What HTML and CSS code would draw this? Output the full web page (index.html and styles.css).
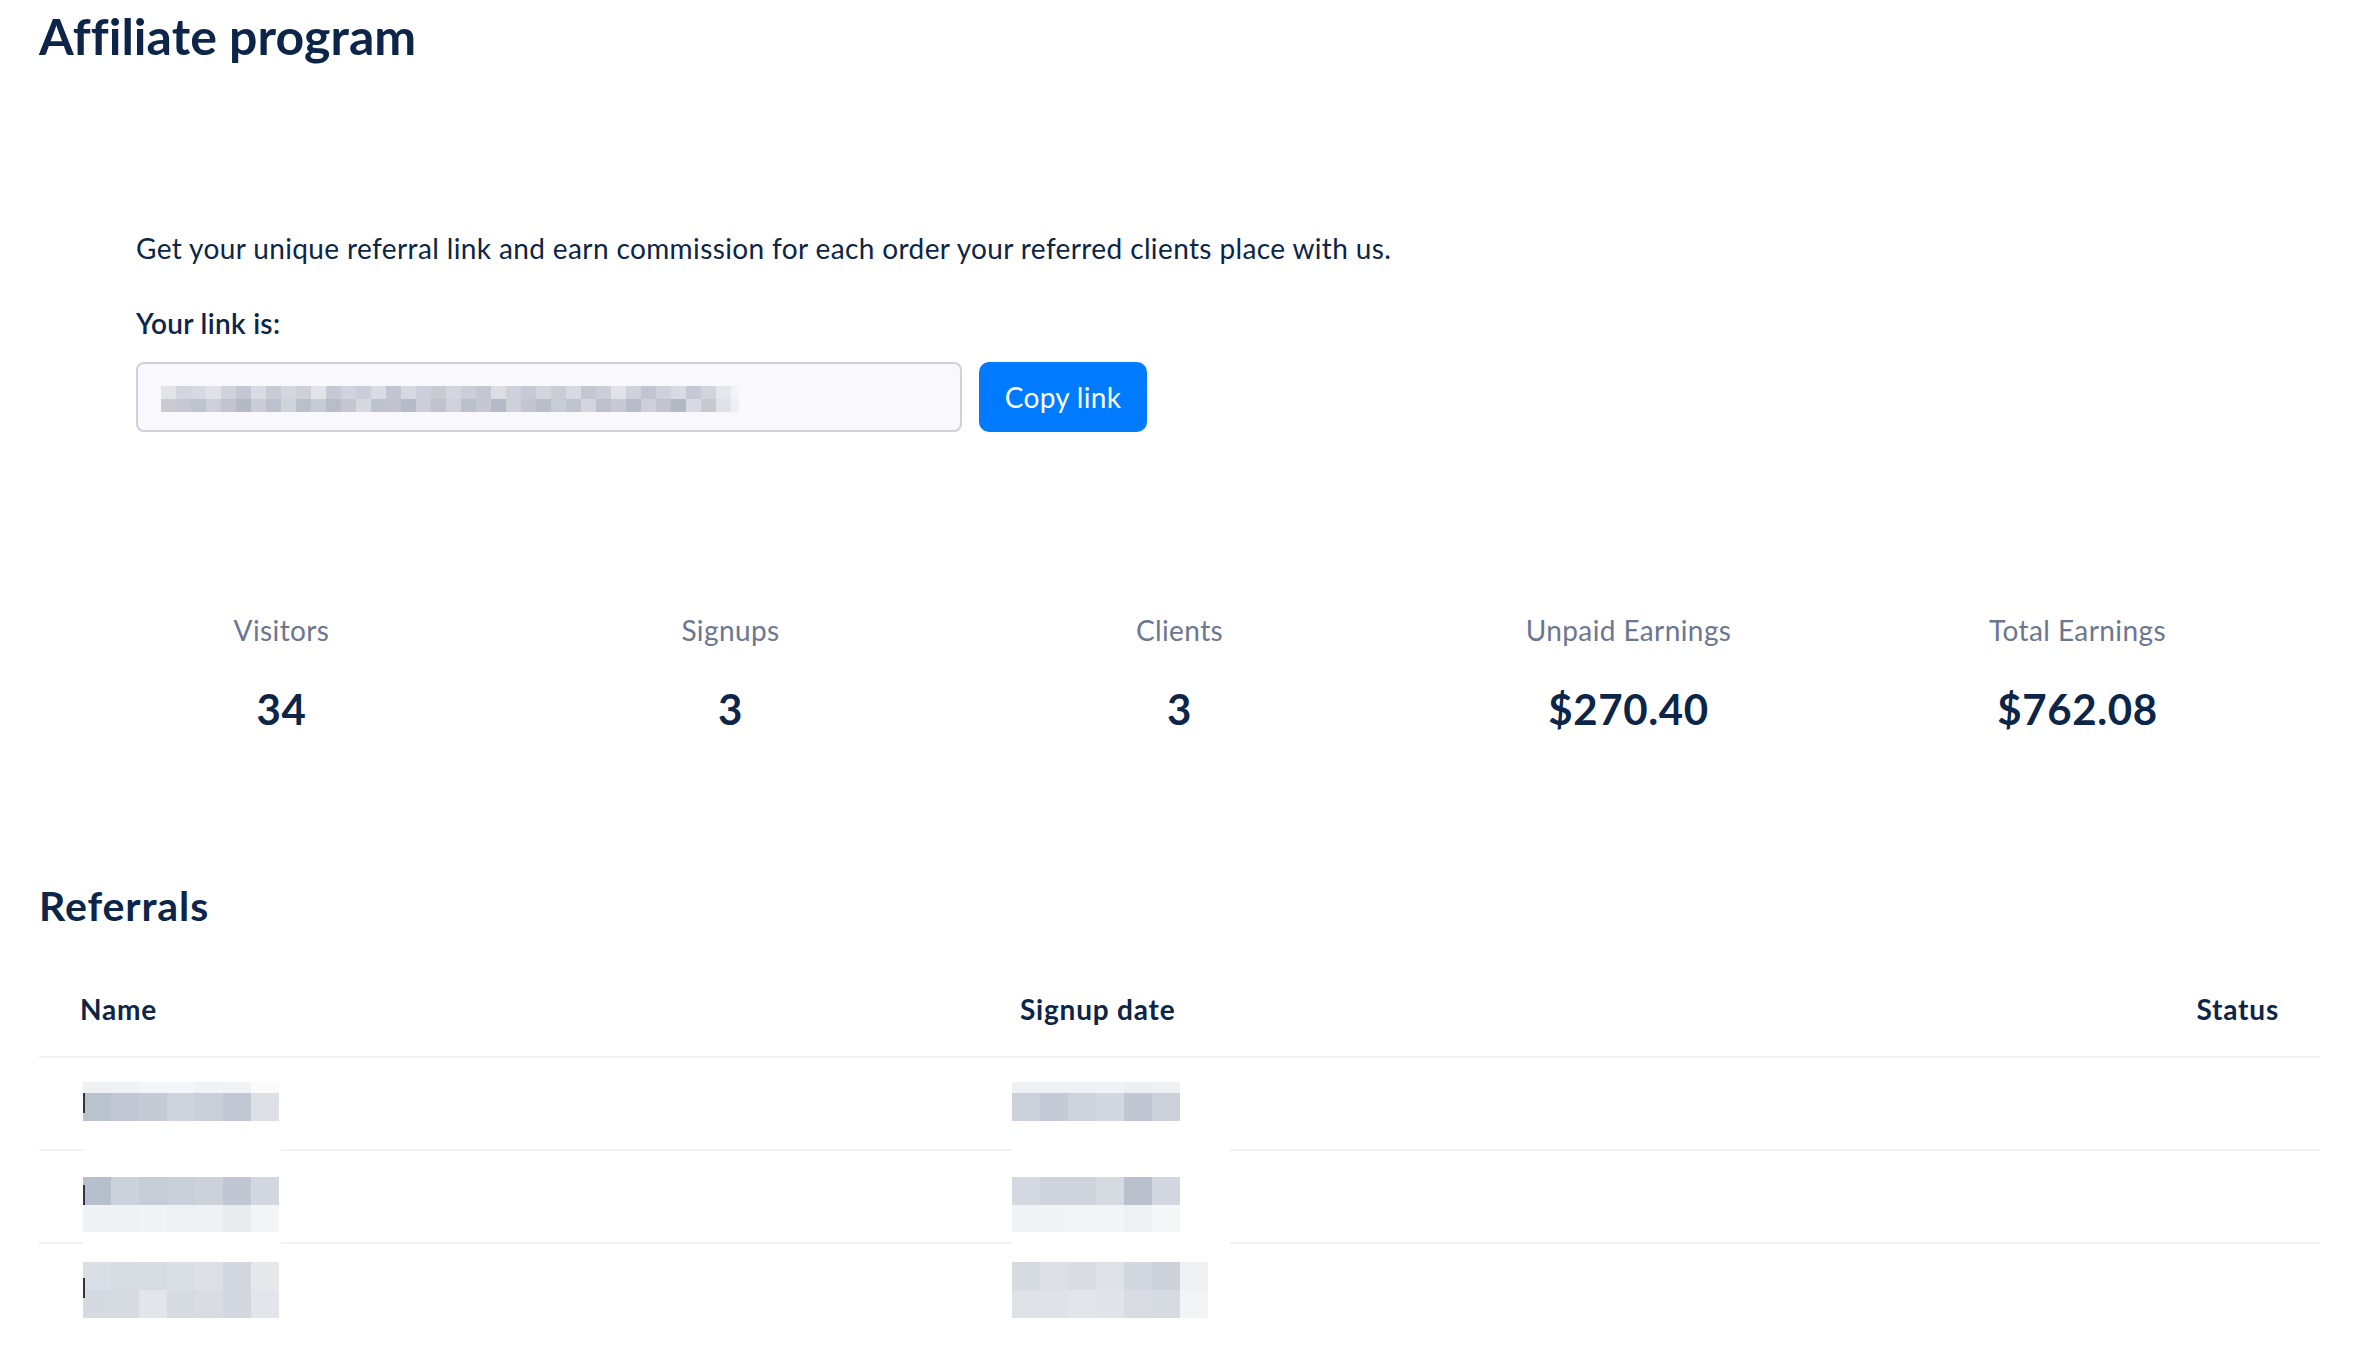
FILE: index.html
```html
<!DOCTYPE html>
<html lang="en">
<head>
<meta charset="utf-8">
<title>Affiliate program</title>
<link rel="stylesheet" href="styles.css">
</head>
<body>
<div class="page">
  <h1 class="title">Affiliate program</h1>

  <section class="intro">
    <p class="desc">Get your unique referral link and earn commission for each order your referred clients place with us.</p>
    <p class="link-label">Your link is:</p>
    <div class="link-row">
      <div class="link-input">
        <div class="mosaic-link"></div>
      </div>
      <button class="copy-btn" type="button">Copy link</button>
    </div>
  </section>

  <section class="stats">
    <div class="stat"><div class="stat-label">Visitors</div><div class="stat-value">34</div></div>
    <div class="stat"><div class="stat-label">Signups</div><div class="stat-value">3</div></div>
    <div class="stat"><div class="stat-label">Clients</div><div class="stat-value">3</div></div>
    <div class="stat"><div class="stat-label">Unpaid Earnings</div><div class="stat-value">$270.40</div></div>
    <div class="stat"><div class="stat-label">Total Earnings</div><div class="stat-value">$762.08</div></div>
  </section>

  <h2 class="section-title">Referrals</h2>

  <div class="ref-table">
    <div class="ref-head">
      <div class="th th-name">Name</div>
      <div class="th th-date">Signup date</div>
      <div class="th th-status">Status</div>
    </div>
    <div class="ref-row r1">
      <div class="td td-name"><div class="blur blur-name n1"></div></div>
      <div class="td td-date"><div class="blur blur-date d1"></div></div>
      <div class="td td-status"></div>
    </div>
    <div class="ref-row r2">
      <div class="td td-name"><div class="blur blur-name n2"></div></div>
      <div class="td td-date"><div class="blur blur-date d2"></div></div>
      <div class="td td-status"></div>
    </div>
    <div class="ref-row r3 last">
      <div class="td td-name"><div class="blur blur-name n3"></div></div>
      <div class="td td-date"><div class="blur blur-date d3"></div></div>
      <div class="td td-status"></div>
    </div>
  </div>
</div>
</body>
</html>
```

FILE: styles.css
```css
* { box-sizing: border-box; }

body {
  margin: 0;
  background: #ffffff;
  font-family: Lato, "Noto Sans", sans-serif;
  color: #0c2548;
}

.page {
  padding: 0 42px 0 39px;
}

.title {
  margin: 6px 0 0;
  font-size: 50px;
  line-height: 60px;
  font-weight: 700;
  letter-spacing: 0.05px;
  color: #0c2548;
}

.intro {
  margin-top: 166px;
  padding-left: 97px;
}

.desc {
  margin: 0;
  font-size: 28px;
  line-height: 32px;
  font-weight: 400;
  letter-spacing: 0.38px;
}

.link-label {
  margin: 43px 0 0;
  font-size: 28px;
  line-height: 32px;
  font-weight: 600;
  letter-spacing: 0.3px;
}

.link-row {
  margin-top: 23px;
  display: flex;
  gap: 17px;
  height: 70px;
}

.link-input {
  width: 826px;
  height: 70px;
  border: 2px solid #d0d1d9;
  border-radius: 8px;
  background: #f9f9fd;
  padding: 22px 0 0 23px;
}

.mosaic-link {
  width: 578px;
  height: 26px;
  background:
    linear-gradient(90deg,
      #e2e4ea 0 15px, #d3d5dd 15px 30px, #d8dae2 30px 45px, #e0e2e8 45px 60px,
      #cfd2da 60px 75px, #c4c7d1 75px 90px, #d9dbe2 90px 105px, #c8cbd5 105px 120px,
      #d5d7df 120px 135px, #cdd0d8 135px 150px, #e3e4ea 150px 165px, #c6c9d3 165px 180px,
      #d0d3db 180px 195px, #cbced7 195px 210px, #dadce3 210px 225px, #c3c6d0 225px 240px,
      #d7d9e0 240px 255px, #cdd0d9 255px 270px, #c8cbd4 270px 285px, #d4d6de 285px 300px,
      #ccced7 300px 315px, #c5c8d2 315px 330px, #dcdee4 330px 345px, #cfd1da 345px 360px,
      #c7cad4 360px 375px, #d3d5dd 375px 390px, #cacdd6 390px 405px, #d8dae1 405px 420px,
      #c4c7d1 420px 435px, #cbced7 435px 450px, #e1e3e8 450px 465px, #d0d2da 465px 480px,
      #c2c5cf 480px 495px, #ced1d9 495px 510px, #d9dbe2 510px 525px, #c6c9d3 525px 540px,
      #d2d4dc 540px 555px, #e6e7ec 555px 570px, #f3f4f7 570px 585px)
      0 0 / 100% 13px no-repeat,
    linear-gradient(90deg,
      #c8cbd4 0 15px, #c6c9d3 15px 30px, #bfc3ce 30px 45px, #cdd0d8 45px 60px,
      #c2c5cf 60px 75px, #b5b9c5 75px 90px, #cacdd6 90px 105px, #bdc1cc 105px 120px,
      #d1d3db 120px 135px, #bbbfca 135px 150px, #c8cbd4 150px 165px, #b9bdc9 165px 180px,
      #c4c7d1 180px 195px, #d6d8df 195px 210px, #bec2cd 210px 225px, #c1c4ce 225px 240px,
      #b7bbc7 240px 255px, #cbced7 255px 270px, #c0c3ce 270px 285px, #d0d2da 285px 300px,
      #bcc0cb 300px 315px, #c5c8d2 315px 330px, #b6bac6 330px 345px, #cfd1d9 345px 360px,
      #c3c6d0 360px 375px, #babec9 375px 390px, #c9ccd5 390px 405px, #c0c4ce 405px 420px,
      #d4d6dd 420px 435px, #bdc1cc 435px 450px, #c7cad3 450px 465px, #b8bcc8 465px 480px,
      #cdd0d8 480px 495px, #c2c5cf 495px 510px, #b4b8c4 510px 525px, #d8dae1 525px 540px,
      #c6c9d2 540px 555px, #e0e2e7 555px 570px, #eeeff3 570px 585px)
      0 13px / 100% 13px no-repeat;
}

.copy-btn {
  width: 168px;
  height: 70px;
  border: 0;
  border-radius: 10px;
  background: #007bff;
  color: #ffffff;
  font-family: Lato, "Noto Sans", sans-serif;
  font-size: 28px;
  font-weight: 400;
  letter-spacing: 0.3px;
  padding: 0;
  cursor: pointer;
}

.stats {
  margin-top: 182px;
  padding: 0 18px;
  display: grid;
  grid-template-columns: repeat(5, 1fr);
}

.stat {
  text-align: center;
}

.stat-label {
  font-size: 28px;
  line-height: 32px;
  letter-spacing: 0.4px;
  color: #6c7690;
}

.stat-value {
  margin-top: 39px;
  font-size: 42px;
  line-height: 48px;
  font-weight: 700;
  letter-spacing: 0.6px;
  color: #0c2548;
}

.section-title {
  margin: 149px 0 0;
  font-size: 41px;
  line-height: 48px;
  font-weight: 700;
  letter-spacing: 0.9px;
  color: #0c2548;
}

.ref-table {
  margin-top: 63px;
}

.ref-head,
.ref-row {
  display: grid;
  grid-template-columns: 940px 1fr 300px;
  border-bottom: 2px solid #f1f1f3;
}

.ref-head {
  padding-bottom: 31px;
}

.th {
  padding: 0 41px;
  font-size: 28px;
  line-height: 32px;
  font-weight: 700;
  letter-spacing: 0.8px;
  color: #0c2548;
}

.th-status {
  text-align: right;
  padding-right: 41px;
}

.ref-row {
  height: 93px;
  align-items: start;
}

.ref-row.last {
  border-bottom: 0;
}

.td-name { padding-left: 44px; }
.td-date { padding-left: 33px; }

.r1 .td { padding-top: 24px; }
.r2 .td { padding-top: 26px; }
.r3 .td { padding-top: 18px; }

.r1 .blur { box-shadow: 0 30px 0 #ffffff; }
.r2 .blur { box-shadow: 0 -30px 0 #ffffff, 0 12px 0 #ffffff; }
.r3 .blur { box-shadow: 0 -30px 0 #ffffff; }

.blur-name { width: 198px; background-color: #ffffff; }
.blur-date { width: 218px; background-color: #ffffff; }

.n1 {
  height: 39px;
  background-image:
    linear-gradient(#2f3442, #2f3442),
    linear-gradient(90deg, #eff0f4 0 28px, #f1f2f6 28px 56px, #f4f5f8 56px 84px, #f4f5f8 84px 112px, #f1f2f5 112px 140px, #f2f3f6 140px 168px, #fbfbfc 168px 196px),
    linear-gradient(90deg, #bac2ce 0 28px, #c1c8d3 28px 56px, #c5cbd5 56px 84px, #ced3dc 84px 112px, #c9ced8 112px 140px, #c2c8d3 140px 168px, #dde0e5 168px 196px);
  background-position: 0 11px, 0 0, 0 11px;
  background-size: 2px 20px, 196px 11px, 196px 28px;
  background-repeat: no-repeat;
}

.n2 {
  height: 57px;
  background-image:
    linear-gradient(#2f3442, #2f3442),
    linear-gradient(90deg, #b7bfcc 0 28px, #ccd2db 28px 56px, #c7cdd7 56px 84px, #c9cfd8 84px 112px, #ccd1da 112px 140px, #c0c7d2 140px 168px, #d3d7df 168px 196px),
    linear-gradient(90deg, #eff1f4 0 28px, #f0f1f4 28px 56px, #f1f2f5 56px 84px, #eef0f3 84px 112px, #f0f1f4 112px 140px, #e9ebef 140px 168px, #f3f4f6 168px 196px);
  background-position: 0 8px, 0 0, 0 28px;
  background-size: 2px 20px, 196px 28px, 196px 29px;
  background-repeat: no-repeat;
}

.n3 {
  height: 56px;
  background-image:
    linear-gradient(#2f3442, #2f3442),
    linear-gradient(90deg, #dadee5 0 28px, #d8dce3 28px 56px, #d7dbe2 56px 84px, #dadee5 84px 112px, #dde0e6 112px 140px, #d2d6de 140px 168px, #e6e8ec 168px 196px),
    linear-gradient(90deg, #d5d9e0 0 28px, #d6dae1 28px 56px, #e3e5ea 56px 84px, #d6dae1 84px 112px, #d9dde3 112px 140px, #d3d7df 140px 168px, #e3e5ea 168px 196px);
  background-position: 0 16px, 0 0, 0 28px;
  background-size: 2px 20px, 196px 28px, 196px 28px;
  background-repeat: no-repeat;
}

.d1 {
  height: 39px;
  background-image:
    linear-gradient(90deg, #eff0f4 0 28px, #f0f1f5 28px 56px, #eff0f4 56px 84px, #f1f2f5 84px 112px, #eceef2 112px 140px, #eff0f4 140px 168px),
    linear-gradient(90deg, #cbd1da 0 28px, #c3cad5 28px 56px, #cdd2db 56px 84px, #d3d7df 84px 112px, #c0c7d2 112px 140px, #cbd0da 140px 168px);
  background-position: 0 0, 0 11px;
  background-size: 168px 11px, 168px 28px;
  background-repeat: no-repeat;
}

.d2 {
  height: 57px;
  background-image:
    linear-gradient(90deg, #d4d8e0 0 28px, #cfd4dc 28px 56px, #cfd4dc 56px 84px, #d6dae1 84px 112px, #bac1cd 112px 140px, #d2d6de 140px 168px),
    linear-gradient(90deg, #f1f2f5 0 28px, #f2f3f5 28px 56px, #f3f4f6 56px 84px, #f3f4f6 84px 112px, #eff0f3 112px 140px, #f6f7f8 140px 168px);
  background-position: 0 0, 0 28px;
  background-size: 168px 28px, 168px 29px;
  background-repeat: no-repeat;
}

.d3 {
  height: 56px;
  background-image:
    linear-gradient(90deg, #d6dae1 0 28px, #dcdfe5 28px 56px, #d9dce3 56px 84px, #dfe2e7 84px 112px, #d3d7df 112px 140px, #ccd1da 140px 168px, #eff0f3 168px 196px),
    linear-gradient(90deg, #dee1e6 0 28px, #dfe2e7 28px 56px, #e3e5ea 56px 84px, #e1e4e9 84px 112px, #d9dde3 112px 140px, #d6dae1 140px 168px, #f3f4f6 168px 196px);
  background-position: 0 0, 0 28px;
  background-size: 196px 28px, 196px 28px;
  background-repeat: no-repeat;
}
```
